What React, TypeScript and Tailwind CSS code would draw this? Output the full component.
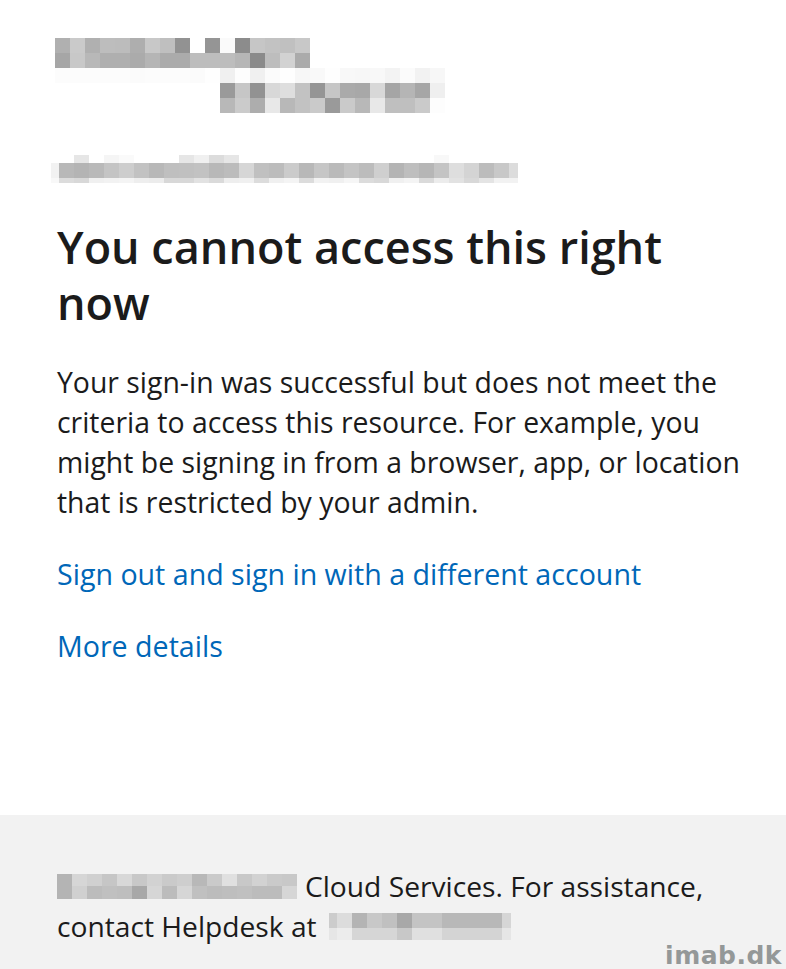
import React from 'react'

// blurred (pixelated) areas of the original screenshot, one class per block
const logoRows: string[][] = [
    ['bg-[#b0b0b0]', 'bg-[#cacaca]', 'bg-[#b0b0b0]', 'bg-[#bdbdbd]', 'bg-[#bcbcbc]', 'bg-[#aeaeae]', 'bg-[#c8c8c8]', 'bg-[#bfbfbf]', 'bg-[#929292]', 'bg-[#ffffff]', 'bg-[#959595]', 'bg-[#fafafa]', 'bg-[#8c8c8c]', 'bg-[#c6c6c6]', 'bg-[#c2c2c2]', 'bg-[#c0c0c0]', 'bg-[#c8c8c8]'],
    ['bg-[#a6a6a6]', 'bg-[#c8c8c8]', 'bg-[#b8b8b8]', 'bg-[#afafaf]', 'bg-[#afafaf]', 'bg-[#ababab]', 'bg-[#b5b5b5]', 'bg-[#ababab]', 'bg-[#ababab]', 'bg-[#bdbdbd]', 'bg-[#bdbdbd]', 'bg-[#bdbdbd]', 'bg-[#b6b6b6]', 'bg-[#8a8a8a]', 'bg-[#bdbdbd]', 'bg-[#d2d2d2]', 'bg-[#ababab]'],
    ['bg-[#fcfcfc]', 'bg-[#fcfcfc]', 'bg-[#fcfcfc]', 'bg-[#fcfcfc]', 'bg-[#fcfcfc]', 'bg-[#fbfbfb]', 'bg-[#fcfcfc]', 'bg-[#fcfcfc]', 'bg-[#fcfcfc]', 'bg-[#fbfbfb]', 'bg-[#fefefe]', 'bg-[#f0f0f0]', 'bg-[#fdfdfd]', 'bg-[#f0f0f0]', 'bg-[#fbfbfb]', 'bg-[#fefefe]', 'bg-[#f7f7f7]', 'bg-[#f9f9f9]', 'bg-[#fefefe]', 'bg-[#f8f8f8]', 'bg-[#f7f7f7]', 'bg-[#f8f8f8]', 'bg-[#f3f3f3]', 'bg-[#fbfbfb]', 'bg-[#f2f2f2]', 'bg-[#f7f7f7]'],
    ['bg-[#9a9a9a]', 'bg-[#c6c6c6]', 'bg-[#929292]', 'bg-[#d8d8d8]', 'bg-[#dedede]', 'bg-[#c2c2c2]', 'bg-[#959595]', 'bg-[#c6c6c6]', 'bg-[#aaaaaa]', 'bg-[#a8a8a8]', 'bg-[#d8d8d8]', 'bg-[#a5a5a5]', 'bg-[#b5b5b5]', 'bg-[#a6a6a6]', 'bg-[#efefef]'],
    ['bg-[#b8b8b8]', 'bg-[#cbcbcb]', 'bg-[#adadad]', 'bg-[#e8e8e8]', 'bg-[#b8b8b8]', 'bg-[#c2c2c2]', 'bg-[#cacaca]', 'bg-[#9a9a9a]', 'bg-[#cacaca]', 'bg-[#b8b8b8]', 'bg-[#e8e8e8]', 'bg-[#bfbfbf]', 'bg-[#bfbfbf]', 'bg-[#cacaca]', 'bg-[#fdfdfd]'],
]

const emailTop = ['bg-[#ffffff]', 'bg-[#ffffff]', 'bg-[#e6e6e6]', 'bg-[#ffffff]', 'bg-[#f5f5f5]', 'bg-[#fafafa]', 'bg-[#ffffff]', 'bg-[#ffffff]', 'bg-[#ffffff]', 'bg-[#e6e6e6]', 'bg-[#f0f0f0]', 'bg-[#dcdcdc]', 'bg-[#e6e6e6]', 'bg-[#ffffff]', 'bg-[#ffffff]', 'bg-[#ffffff]', 'bg-[#ffffff]', 'bg-[#ffffff]', 'bg-[#ffffff]', 'bg-[#ffffff]', 'bg-[#ffffff]', 'bg-[#ffffff]', 'bg-[#ffffff]', 'bg-[#ffffff]', 'bg-[#ffffff]', 'bg-[#ffffff]', 'bg-[#f8f8f8]', 'bg-[#ffffff]', 'bg-[#ffffff]', 'bg-[#ffffff]', 'bg-[#ffffff]', 'bg-[#ffffff]']
const emailMid = ['bg-[#f2f2f2]', 'bg-[#b8b8b8]', 'bg-[#b4b4b4]', 'bg-[#b9b9b9]', 'bg-[#c4c4c4]', 'bg-[#cdcdcd]', 'bg-[#c2c2c2]', 'bg-[#b8b8b8]', 'bg-[#bfbfbf]', 'bg-[#c0c0c0]', 'bg-[#c2c2c2]', 'bg-[#b8b8b8]', 'bg-[#bcbcbc]', 'bg-[#d6d6d6]', 'bg-[#c0c0c0]', 'bg-[#bcbcbc]', 'bg-[#cbcbcb]', 'bg-[#b8b8b8]', 'bg-[#c6c6c6]', 'bg-[#bababa]', 'bg-[#c4c4c4]', 'bg-[#bcbcbc]', 'bg-[#cfcfcf]', 'bg-[#b4b4b4]', 'bg-[#bebebe]', 'bg-[#b6b6b6]', 'bg-[#c4c4c4]', 'bg-[#dedede]', 'bg-[#d4d4d4]', 'bg-[#bcbcbc]', 'bg-[#c8c8c8]', 'bg-[#dcdcdc]']
const emailBottom = ['bg-[#f8f8f8]', 'bg-[#dcdcdc]', 'bg-[#d8d8d8]', 'bg-[#f0f0f0]', 'bg-[#f2f2f2]', 'bg-[#f4f4f4]', 'bg-[#eeeeee]', 'bg-[#ececec]', 'bg-[#d8d8d8]', 'bg-[#d8d8d8]', 'bg-[#e2e2e2]', 'bg-[#dadada]', 'bg-[#eeeeee]', 'bg-[#f0f0f0]', 'bg-[#dcdcdc]', 'bg-[#f0f0f0]', 'bg-[#f4f4f4]', 'bg-[#dcdcdc]', 'bg-[#f2f2f2]', 'bg-[#f0f0f0]', 'bg-[#f6f6f6]', 'bg-[#dcdcdc]', 'bg-[#d8d8d8]', 'bg-[#f0f0f0]', 'bg-[#f4f4f4]', 'bg-[#dadada]', 'bg-[#ececec]', 'bg-[#e2e2e2]', 'bg-[#d8d8d8]', 'bg-[#e4e4e4]', 'bg-[#f2f2f2]', 'bg-[#f2f2f2]']

const orgTop = ['bg-[#b4b4b4]', 'bg-[#d6d6d6]', 'bg-[#d0d0d0]', 'bg-[#c6c6c6]', 'bg-[#d8d8d8]', 'bg-[#c8c8c8]', 'bg-[#d2d2d2]', 'bg-[#cacaca]', 'bg-[#cecece]', 'bg-[#b8b8b8]', 'bg-[#cacaca]', 'bg-[#e0e0e0]', 'bg-[#c8c8c8]', 'bg-[#d2d2d2]', 'bg-[#cacaca]', 'bg-[#c8c8c8]']
const orgBottom = ['bg-[#b4b4b4]', 'bg-[#d0d0d0]', 'bg-[#bcbcbc]', 'bg-[#c0c0c0]', 'bg-[#bebebe]', 'bg-[#a8a8a8]', 'bg-[#d6d6d6]', 'bg-[#bcbcbc]', 'bg-[#d6d6d6]', 'bg-[#c0c0c0]', 'bg-[#bcbcbc]', 'bg-[#bebebe]', 'bg-[#c0c0c0]', 'bg-[#bcbcbc]', 'bg-[#bcbcbc]', 'bg-[#d6d6d6]']

const phoneTop = ['bg-[#cccccc]', 'bg-[#dcdcdc]', 'bg-[#b4b4b4]', 'bg-[#c8c8c8]', 'bg-[#c0c0c0]', 'bg-[#a8a8a8]', 'bg-[#c4c4c4]', 'bg-[#c4c4c4]', 'bg-[#b8b8b8]', 'bg-[#b8b8b8]', 'bg-[#b8b8b8]', 'bg-[#b8b8b8]', 'bg-[#d6d6d6]']
const phoneBottom = ['bg-[#e6e6e6]', 'bg-[#ececec]', 'bg-[#d6d6d6]', 'bg-[#d6d6d6]', 'bg-[#d6d6d6]', 'bg-[#c8c8c8]', 'bg-[#e0e0e0]', 'bg-[#e0e0e0]', 'bg-[#d4d4d4]', 'bg-[#d4d4d4]', 'bg-[#d4d4d4]', 'bg-[#d4d4d4]', 'bg-[#e6e6e6]']

function cellWidth(i: number, count: number, edges: boolean) {
    if (!edges) return 'w-[15px]'
    if (i === 0) return 'w-[8px]'
    if (i === count - 1) return 'w-[9px]'
    return 'w-[15px]'
}

function Row({ cells, height, edges = false, offset = 0 }: { cells: string[], height: string, edges?: boolean, offset?: number }) {
    return (
        <div className={`flex ${height}`}>
            {offset > 0 && <div className="w-[165px] shrink-0" />}
            {cells.map((c, i) => (
                <div key={i} className={`${c} ${cellWidth(i, cells.length, edges)} shrink-0`} />
            ))}
        </div>
    )
}

export default function App() {
    const font = { fontFamily: '"Open Sans", "Noto Sans", sans-serif' }

    return (
        <div className="relative flex h-[969px] w-full flex-col bg-white text-[#1b1b1b]" style={font}>

            <main className="h-[815px] pl-[57px]">

                <div className="ml-[-2px] pt-[38px]">
                    <Row cells={logoRows[0]} height="h-[15px]" />
                    <Row cells={logoRows[1]} height="h-[15px]" />
                    <Row cells={logoRows[2]} height="h-[15px]" />
                    <Row cells={logoRows[3]} height="h-[15px]" offset={1} />
                    <Row cells={logoRows[4]} height="h-[15px]" offset={1} />
                </div>

                <div className="ml-[-6px] mt-[42px]">
                    <Row cells={emailTop} height="h-[8px]" edges />
                    <Row cells={emailMid} height="h-[15px]" edges />
                    <Row cells={emailBottom} height="h-[5px]" edges />
                </div>

                <h1 className="mt-[36px] w-[672px] text-[45px] leading-[56px] font-semibold">You cannot access this right now</h1>

                <p className="mt-[31px] w-[700px] text-[28.4px] leading-[40px]">
                    Your sign-in was successful but does not meet the criteria to access this resource. For example, you might be signing in from a browser, app, or location that is restricted by your admin.
                </p>

                <div className="mt-[32px] text-[28.6px] leading-[40px] text-[#0067b8]">
                    <a href="#" className="block">Sign out and sign in with a different account</a>
                    <a href="#" className="mt-[32px] block">More details</a>
                </div>

            </main>

            <footer className="flex-1 bg-[#f2f2f2] pl-[57px] pt-[51px] text-[28.2px] leading-[40px] text-[#1b1b1b]">
                <div className="flex items-center">
                    <div className="flex flex-col">
                        <Row cells={orgTop} height="h-[12px]" />
                        <Row cells={orgBottom} height="h-[13px]" />
                    </div>
                    <span className="ml-[8px]">Cloud Services. For assistance,</span>
                </div>
                <div className="flex items-center">
                    <span>contact Helpdesk at</span>
                    <div className="ml-[12px] flex flex-col">
                        <Row cells={phoneTop} height="h-[15px]" edges />
                        <Row cells={phoneBottom} height="h-[12px]" edges />
                    </div>
                </div>
            </footer>

            <div className="absolute bottom-[1px] right-[4px] text-[25px] font-bold leading-none tracking-[0.5px] text-[#949898]" style={{ fontFamily: '"DejaVu Sans", sans-serif' }}>
                imab.dk
            </div>
        </div>
    )
}
